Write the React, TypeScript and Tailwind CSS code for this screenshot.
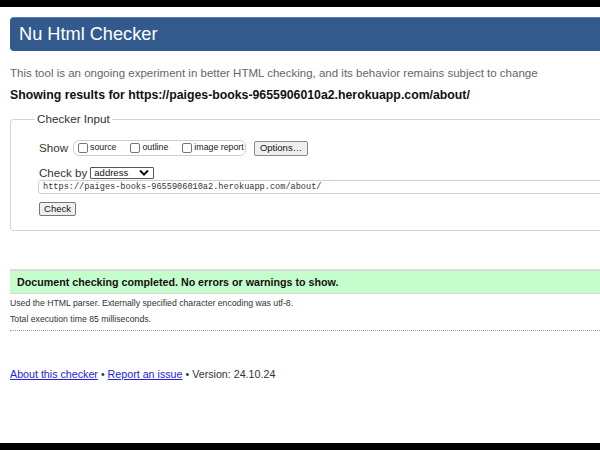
import React from "react";

const Box = () => (
  <span className="inline-block shrink-0 w-[10px] h-[10px] border border-[#767676] rounded-[2px] bg-white mr-[2px]" />
);

export default function App() {
  return (
    <div className="w-[600px] h-[450px] bg-white overflow-hidden flex flex-col text-[#222]" style={{ fontFamily: '"Liberation Sans", Arial, sans-serif' }}>
      <div className="h-[7px] bg-black shrink-0" />
      <div className="flex-1 overflow-hidden pl-[10px]">
        <div className="mt-[10px] h-[34px] w-[620px] bg-[#335a8c] rounded-[4px] border-t border-[#5a7db0] flex items-center pl-[9px]">
          <span className="text-white text-[18.2px] leading-none">Nu Html Checker</span>
        </div>
        <p className="mt-[15px] text-[11.5px] leading-[14px] text-[#666] whitespace-nowrap">
          This tool is an ongoing experiment in better HTML checking, and its behavior remains subject to change
        </p>
        <p className="mt-[8px] text-[12.3px] leading-[15px] font-bold text-[#111] whitespace-nowrap">
          Showing results for https://paiges-books-9655906010a2.herokuapp.com/about/
        </p>
        <fieldset className="mt-[9px] w-[620px] h-[119px] border border-[#d4d4d4] rounded-[3px] pl-[28px] pt-0">
          <legend className="-ml-[4px] px-[2px] text-[11.7px] leading-[14px] text-[#333]">Checker Input</legend>
          <div className="mt-[14px] h-[16px] flex items-center">
            <span className="text-[11.6px] text-[#333] leading-[14px]">Show</span>
            <div className="ml-[5px] shrink-0 h-[16px] w-[173px] border border-[#cfcfcf] rounded-[6px] flex items-center pl-[4px] text-[8.8px] text-[#222] whitespace-nowrap">
              <span className="flex items-center"><Box />source</span>
              <span className="flex items-center ml-[14px]"><Box />outline</span>
              <span className="flex items-center ml-[14px]"><Box />image report</span>
            </div>
            <div className="ml-[8px] shrink-0 h-[15px] w-[54px] border border-[#8a8a8a] rounded-[2px] bg-[#efefef] flex items-center justify-center text-[9.5px] text-[#111]">
              Options…
            </div>
          </div>
          <div className="mt-[9px] h-[15px] flex items-center">
            <span className="text-[11.6px] text-[#333] leading-[14px]">Check by</span>
            <div className="ml-[3px] h-[12px] w-[64px] border border-[#555] rounded-[1px] flex items-center justify-between pl-[3px] pr-[4px] text-[9.5px] text-[#111]">
              <span className="leading-none">address</span>
              <svg width="10" height="7" viewBox="0 0 10 7"><path d="M1 1.5 L5 5.5 L9 1.5" stroke="#111" strokeWidth="2" fill="none" /></svg>
            </div>
          </div>
          <div className="-ml-[1px] h-[14px] w-[600px] border border-[#d0d0d0] rounded-[3px] flex items-center pl-[4px] text-[8.6px] text-[#333] whitespace-nowrap" style={{ fontFamily: '"Liberation Mono", "Courier New", monospace' }}>
            https://paiges-books-9655906010a2.herokuapp.com/about/
          </div>
          <div className="mt-[8px] h-[14px] w-[37px] border border-[#767676] rounded-[2px] bg-[#efefef] flex items-center justify-center text-[9.5px] text-[#111]">
            Check
          </div>
        </fieldset>
        <div className="mt-[38px] w-[620px] h-[25px] bg-[#c6fdcc] border-t-[2px] border-[#dcdcdc] border-b border-b-[#d8d8d8] flex items-center pl-[7px] text-[10.7px] font-bold text-[#111] whitespace-nowrap">
          Document checking completed. No errors or warnings to show.
        </div>
        <p className="mt-[4px] text-[8.7px] leading-[11px] text-[#333] whitespace-nowrap">
          Used the HTML parser. Externally specified character encoding was utf-8.
        </p>
        <p className="mt-[5px] text-[8.7px] leading-[11px] text-[#333] whitespace-nowrap">Total execution time 85 milliseconds.</p>
        <div className="mt-[5px] w-[600px] border-t border-dotted border-[#999]" />
        <p className="mt-[37px] text-[10.7px] leading-[13px] text-[#333] whitespace-nowrap">
          <a className="underline" style={{ color: "#2222dd" }}>About this checker</a>
          {" • "}
          <a className="underline" style={{ color: "#2222dd" }}>Report an issue</a>
          {" • Version: 24.10.24"}
        </p>
      </div>
      <div className="h-[7px] bg-black shrink-0" />
    </div>
  );
}
